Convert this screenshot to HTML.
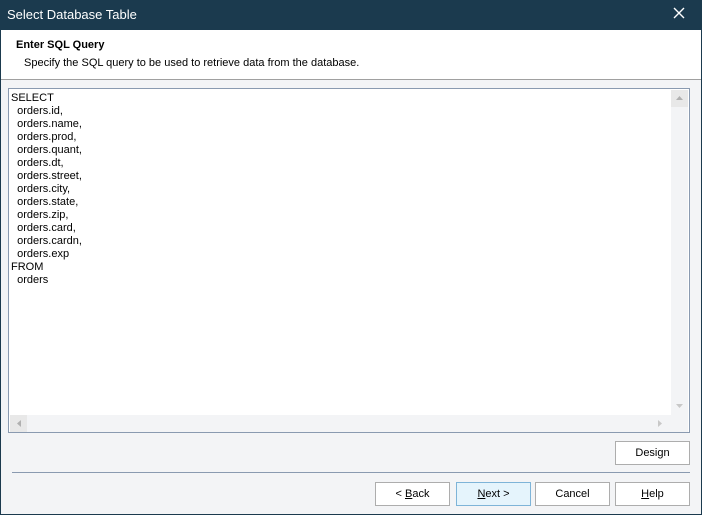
<!DOCTYPE html>
<html><head><style>
*{margin:0;padding:0;box-sizing:border-box}
body{width:702px;height:515px;background:#1b3a4e;font-family:"Liberation Sans",sans-serif;font-size:11px;color:#000;position:relative;overflow:hidden}
.title{position:absolute;left:0;top:0;width:702px;height:30px;color:#fff;font-size:13px;padding:7px 0 0 7px}
.x{position:absolute;right:16px;top:6px;width:14px;height:14px}
.win{position:absolute;left:1px;top:30px;width:700px;height:484px;background:#f3f4f6}
.head{position:absolute;left:0;top:0;width:700px;height:50px;background:#fff;border-bottom:1px solid #a0a0a0}
.h1{position:absolute;left:15px;top:9px;font-weight:bold;font-size:11px}
.h2{position:absolute;left:23px;top:27px}
.ed{position:absolute;left:7px;top:58px;width:682px;height:345px;border:1px solid #8a9ab0;background:#fff}
.txt{position:absolute;left:2px;top:3px;line-height:13px;white-space:pre}
.vs{position:absolute;left:662px;top:1px;width:17px;height:325px;background:#f3f4f6}
.hs{position:absolute;left:1px;top:326px;width:661px;height:17px;background:#f3f4f6}
.corner{position:absolute;left:662px;top:326px;width:17px;height:17px;background:#f3f4f6}
.btn{position:absolute;width:75px;height:24px;border:1px solid #adadad;background:#fff;text-align:center;line-height:22px;font-size:11px}
.sep{position:absolute;left:11px;top:442px;width:678px;height:1px;background:#8a9ab0}
</style></head><body>
<div class="title">Select Database Table</div>
<svg class="x" viewBox="0 0 14 14"><path d="M2 2L12 12M12 2L2 12" stroke="#fff" stroke-width="1.4"/></svg>
<div class="win">
<div class="head"><div class="h1">Enter SQL Query</div><div class="h2">Specify the SQL query to be used to retrieve data from the database.</div></div>
<div class="ed">
<div class="txt">SELECT
  orders.id,
  orders.name,
  orders.prod,
  orders.quant,
  orders.dt,
  orders.street,
  orders.city,
  orders.state,
  orders.zip,
  orders.card,
  orders.cardn,
  orders.exp
FROM
  orders</div>
<div class="vs"><div style="position:absolute;left:0;top:0;width:17px;height:17px;background:#e8e8e8"></div><svg style="position:absolute;left:5px;top:6px" width="7" height="4"><path d="M0 4L3.5 0L7 4Z" fill="#b0b0b0"/></svg><svg style="position:absolute;left:5px;top:314px" width="7" height="4"><path d="M0 0L3.5 4L7 0Z" fill="#c8c8c8"/></svg></div>
<div class="hs"><div style="position:absolute;left:0;top:0;width:17px;height:17px;background:#e8e8e8"></div><svg style="position:absolute;left:7px;top:5px" width="4" height="7"><path d="M4 0L0 3.5L4 7Z" fill="#b0b0b0"/></svg><svg style="position:absolute;left:648px;top:5px" width="4" height="7"><path d="M0 0L4 3.5L0 7Z" fill="#c8c8c8"/></svg></div>
<div class="corner"></div>
</div>
<div class="btn" style="left:614px;top:411px">Design</div>
<div class="sep"></div>
<div class="btn" style="left:374px;top:452px">&lt; <u>B</u>ack</div>
<div class="btn" style="left:455px;top:452px;background:#e5f4fc;border-color:#7eb4d8"><u>N</u>ext &gt;</div>
<div class="btn" style="left:534px;top:452px">Cancel</div>
<div class="btn" style="left:614px;top:452px"><u>H</u>elp</div>
</div>
</body></html>
